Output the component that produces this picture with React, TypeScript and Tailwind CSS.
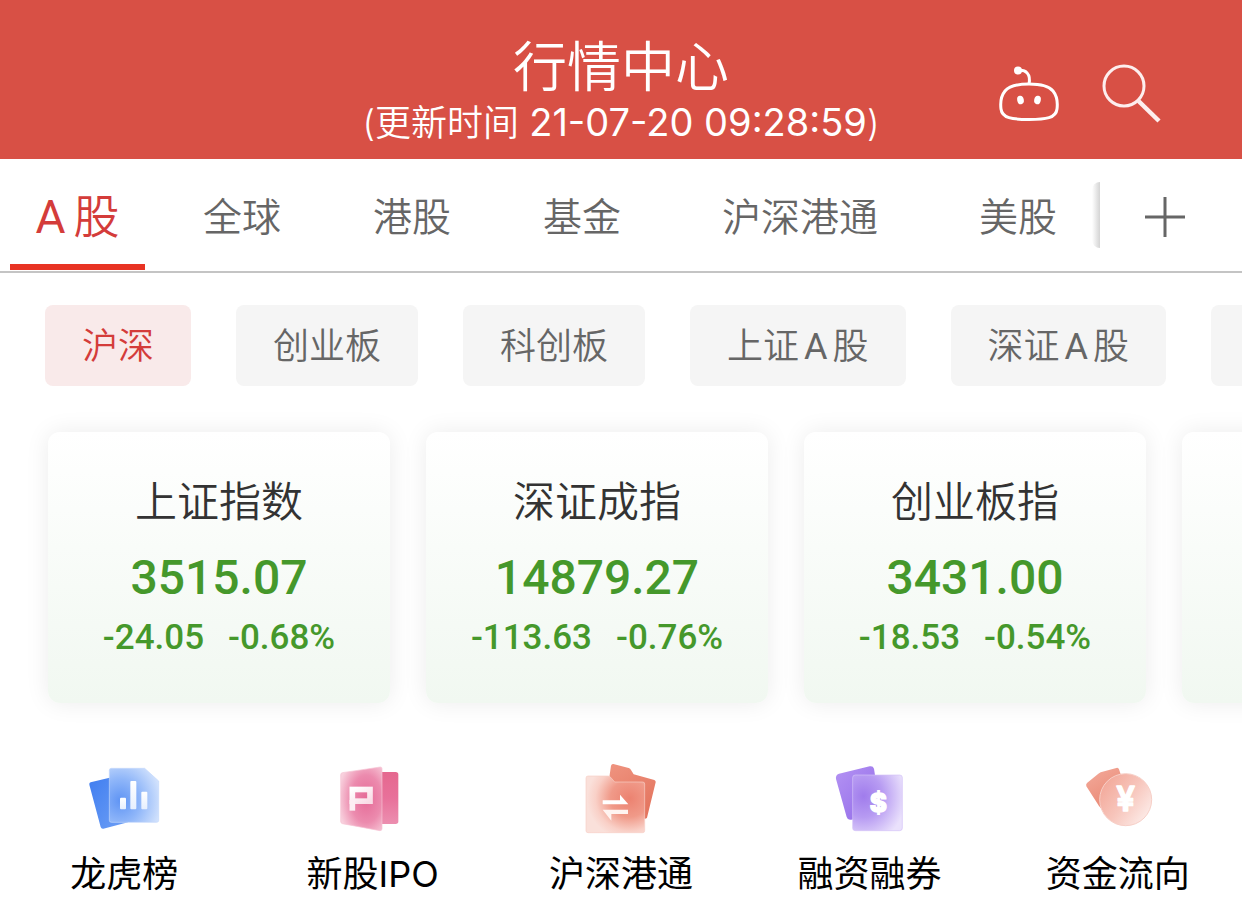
import type { ReactNode } from "react";

const tabs = [
  { label: "全球", width: "w-[170px]" },
  { label: "港股", width: "w-[170px]" },
  { label: "基金", width: "w-[170px]" },
  { label: "沪深港通", width: "w-[266px]" },
  { label: "美股", width: "w-[170px]" },
];

const boards: { key: string; label: ReactNode }[] = [
  { key: "hs", label: "沪深" },
  { key: "cyb", label: "创业板" },
  { key: "kcb", label: "科创板" },
  {
    key: "sha",
    label: (
      <>
        上证<span className="mx-[5px] font-normal">A</span>股
      </>
    ),
  },
  {
    key: "sza",
    label: (
      <>
        深证<span className="mx-[5px] font-normal">A</span>股
      </>
    ),
  },
];

const indices = [
  { name: "上证指数", value: "3515.07", change: "-24.05", percent: "-0.68%" },
  { name: "深证成指", value: "14879.27", change: "-113.63", percent: "-0.76%" },
  { name: "创业板指", value: "3431.00", change: "-18.53", percent: "-0.54%" },
];

function RobotIcon() {
  return (
    <svg width="62" height="56" viewBox="0 0 62 56" fill="none" stroke="#fff" strokeWidth="3">
      <path d="M31 18C44 18 51 20 55 25C59 30 60 35 59 43C58 52 48 53.500 31 53.500C14 53.500 4 52 3 43C2 35 3 30 7 25C11 20 18 18 31 18Z" />
      <path d="M20 4.500C28 3.500 33 8 31 18" />
      <circle cx="20" cy="4.500" r="4" fill="#fff" stroke="none" />
      <ellipse cx="22.500" cy="34" rx="3.300" ry="4.300" fill="#fff" stroke="none" transform="rotate(-12 22.500 34)" />
      <ellipse cx="39.500" cy="34" rx="3.300" ry="4.300" fill="#fff" stroke="none" transform="rotate(12 39.500 34)" />
    </svg>
  );
}

function SearchIcon() {
  return (
    <svg width="60" height="60" viewBox="0 0 60 60" fill="none" stroke="#fdeeee">
      <circle cx="22" cy="22" r="20" strokeWidth="3" />
      <path d="M36.500 37L57 57" strokeWidth="4.500" />
    </svg>
  );
}

function RankIcon() {
  return (
    <svg width="80" height="80" viewBox="72 24 240 240">
      <defs>
        <linearGradient id="rank-back" x1="0" y1="0" x2="1" y2="1">
          <stop offset="0" stopColor="#3f7df0" />
          <stop offset="1" stopColor="#6fa0f5" />
        </linearGradient>
        <radialGradient id="rank-front" cx="0.22" cy="0.6" r="0.9">
          <stop offset="0" stopColor="#5f94f4" />
          <stop offset="0.450" stopColor="#8fb6f9" />
          <stop offset="1" stopColor="#dbe8fd" />
        </radialGradient>
        <linearGradient id="rank-bar" x1="0" y1="0" x2="0" y2="1">
          <stop offset="0" stopColor="#fff" />
          <stop offset="1" stopColor="#e6effe" />
        </linearGradient>
      </defs>
      <path d="M92 97L180 76L204 217L130 236Q124 237 122 231L88 104Q87 98 92 97Z" fill="url(#rank-back)" />
      <path d="M154 55H254L296 93V211Q296 217 290 217H154Q148 217 148 211V61Q148 55 154 55Z" fill="url(#rank-front)" stroke="#c3d8fc" strokeWidth="2" />
      <rect x="180" y="143" width="18" height="35" rx="3" fill="url(#rank-bar)" />
      <rect x="211" y="93" width="18" height="85" rx="3" fill="url(#rank-bar)" />
      <rect x="244" y="125" width="18" height="53" rx="3" fill="url(#rank-bar)" />
    </svg>
  );
}

function IpoIcon() {
  return (
    <svg width="80" height="80" viewBox="98 24 240 240">
      <defs>
        <linearGradient id="ipo-back" x1="0" y1="0" x2="0" y2="1">
          <stop offset="0" stopColor="#e5688f" />
          <stop offset="0.500" stopColor="#e8719a" />
          <stop offset="1" stopColor="#ec8fb0" />
        </linearGradient>
        <radialGradient id="ipo-front" cx="0.62" cy="0.5" r="0.68">
          <stop offset="0" stopColor="#e56a97" />
          <stop offset="0.550" stopColor="#ec8bae" />
          <stop offset="1" stopColor="#f8d0dd" />
        </radialGradient>
        <linearGradient id="ipo-mark" x1="0" y1="0" x2="1" y2="1">
          <stop offset="0" stopColor="#fff" />
          <stop offset="1" stopColor="#f9dce6" />
        </linearGradient>
      </defs>
      <rect x="225" y="66" width="69" height="156" rx="8" fill="url(#ipo-back)" />
      <path d="M126 68L240 51Q245 51 245 56V236Q245 242 239 242L126 221Q121 220 121 214V74Q121 69 126 68Z" fill="url(#ipo-front)" stroke="#f6c3d3" strokeWidth="2" />
      <rect x="156" y="118.500" width="53" height="35" fill="none" stroke="url(#ipo-mark)" strokeWidth="17" />
      <rect x="147.500" y="150" width="17" height="32" fill="#fdeef3" />
    </svg>
  );
}

function ConnectIcon() {
  return (
    <svg width="80" height="80" viewBox="123 24 240 240">
      <defs>
        <linearGradient id="connect-back" x1="0" y1="0" x2="0.600" y2="1">
          <stop offset="0" stopColor="#ef9480" />
          <stop offset="1" stopColor="#e4755f" />
        </linearGradient>
        <radialGradient id="connect-front" cx="0.74" cy="0.4" r="0.72">
          <stop offset="0" stopColor="#ec8270" />
          <stop offset="0.450" stopColor="#f09a89" />
          <stop offset="0.800" stopColor="#f9d0c7" />
          <stop offset="1" stopColor="#fae0da" />
        </radialGradient>
      </defs>
      <path d="M220 42L266 54Q271 56 273 60L281 73L343 90Q348 92 347 97L321 203Q319 206 314 206H206V95L213 47Q215 41 220 42Z" fill="url(#connect-back)" />
      <path d="M144 78H204Q209 78 212 82L224 96H308Q314 96 314 102V242Q314 248 308 248H144Q138 248 138 242V84Q138 78 144 78Z" fill="url(#connect-front)" stroke="#f8cfc6" strokeWidth="2" />
      <path d="M188 151H240V134L265 163H188Z" fill="#fff" />
      <path d="M264 179H188L214 212V192H264Z" fill="#fff4f1" />
    </svg>
  );
}

function MarginIcon() {
  return (
    <svg width="80" height="80" viewBox="118 24 240 240">
      <defs>
        <linearGradient id="margin-back" x1="0" y1="0" x2="1" y2="1">
          <stop offset="0" stopColor="#b493f3" />
          <stop offset="1" stopColor="#9068e8" />
        </linearGradient>
        <radialGradient id="margin-front" cx="0.22" cy="0.38" r="0.85">
          <stop offset="0" stopColor="#a07cec" />
          <stop offset="0.450" stopColor="#b79bf2" />
          <stop offset="1" stopColor="#eae1fc" />
        </radialGradient>
      </defs>
      <path d="M148 71L240 49Q250 47 253 56L275 198L184 209Q174 211 171 201L139 87Q137 75 148 71Z" fill="url(#margin-back)" />
      <rect x="189" y="75" width="149" height="167" rx="8" fill="url(#margin-front)" stroke="#d3c1f8" strokeWidth="2" />
      <text x="266" y="186" textAnchor="middle" fontFamily="Inter, sans-serif" fontWeight="800" fontSize="78" fill="#fff" stroke="#fff" strokeWidth="4">
        $
      </text>
    </svg>
  );
}

function FlowIcon() {
  return (
    <svg width="80" height="80" viewBox="113 24 240 240">
      <defs>
        <linearGradient id="flow-back" x1="0" y1="0" x2="0.500" y2="1">
          <stop offset="0" stopColor="#f3ab9c" />
          <stop offset="1" stopColor="#ea8975" />
        </linearGradient>
        <linearGradient id="flow-front" x1="0.100" y1="0.200" x2="0.900" y2="0.800">
          <stop offset="0" stopColor="#f3ab9d" />
          <stop offset="0.500" stopColor="#f7c5bb" />
          <stop offset="1" stopColor="#fce8e4" />
        </linearGradient>
      </defs>
      <path d="M181 67L228 54Q234 52 236 58L242 76L196 178L185 177Q179 173 176 168L138 109Q136 103 140 99L174 71Z" fill="url(#flow-back)" />
      <circle cx="256" cy="149" r="78" fill="url(#flow-front)" stroke="#f7cfc7" strokeWidth="3" />
      <text x="256" y="184" textAnchor="middle" fontFamily="Inter, sans-serif" fontWeight="600" fontSize="100" fill="#fff" stroke="#fff" strokeWidth="4" strokeLinejoin="round">
        ¥
      </text>
    </svg>
  );
}

const shortcuts = [
  { label: "龙虎榜", icon: <RankIcon /> },
  { label: "新股IPO", icon: <IpoIcon /> },
  { label: "沪深港通", icon: <ConnectIcon /> },
  { label: "融资融券", icon: <MarginIcon /> },
  { label: "资金流向", icon: <FlowIcon /> },
];

export default function App() {
  return (
    <main className="min-h-screen overflow-hidden bg-white font-['Inter','Noto_Sans_CJK_SC',sans-serif] font-[350] text-black">
      {/* Header */}
      <header className="grid grid-cols-[1fr_auto_1fr] items-center bg-[#d85045] pt-9 pb-[14px] text-white">
        <div />
        <div className="text-center">
          <h1 className="text-[54px] leading-[64px]">行情中心</h1>
          <p className="text-[36px] leading-[44px]">
            (更新时间 <time className="text-[38px] font-normal">21-07-20 09:28:59</time>)
          </p>
        </div>
        <div className="flex items-center justify-end gap-[42px] pt-[6px] pr-20">
          <button type="button" aria-label="智能助手">
            <RobotIcon />
          </button>
          <button type="button" aria-label="搜索">
            <SearchIcon />
          </button>
        </div>
      </header>

      {/* Market tabs */}
      <nav className="flex h-[114px] border-b-2 border-[#c4c4c4] text-[39px] text-[#666]">
        <div className="flex min-w-0 flex-1 overflow-hidden pl-[10px]">
          <button
            type="button"
            className="mr-3 mb-px w-[135px] shrink-0 border-b-6 border-[#e83323] pt-3 font-['Roboto','Noto_Sans_CJK_SC',sans-serif] text-[46px] text-[#d43c3a]"
          >
            <span className="mr-2 font-normal">A</span>股
          </button>
          {tabs.map((tab) => (
            <button key={tab.label} type="button" className={`${tab.width} shrink-0 pt-1`}>
              {tab.label}
            </button>
          ))}
        </div>
        <div className="-ml-2 h-[66px] w-2 self-center rounded-l-full bg-linear-to-r from-transparent to-[#d4d4d4]" />
        <button type="button" aria-label="添加" className="flex w-[142px] shrink-0 items-center justify-center pt-1 pr-3">
          <svg width="40" height="40" viewBox="0 0 40 40" stroke="#666" strokeWidth="3">
            <path d="M0 20H40M20 0V40" />
          </svg>
        </button>
      </nav>

      {/* Boards */}
      <div className="flex gap-[45px] overflow-hidden pt-8 pl-[45px] font-['Roboto','Noto_Sans_CJK_SC',sans-serif]">
        {boards.map((board, index) => (
          <button
            key={board.key}
            type="button"
            className={`h-[81px] shrink-0 rounded-lg px-[37px] pt-[2px] text-[36px] ${
              index === 0 ? "bg-[#f9eaea] text-[#d43c3a]" : "bg-[#f5f5f5] text-[#666]"
            }`}
          >
            {board.label}
          </button>
        ))}
        <button type="button" aria-label="更多板块" className="h-[81px] w-[146px] shrink-0 rounded-lg bg-[#f5f5f5]" />
      </div>

      {/* Indices */}
      <section className="flex gap-9 overflow-hidden pt-[46px] pb-9 pl-12">
        {indices.map((item) => (
          <article
            key={item.name}
            className="h-[271px] w-[342px] shrink-0 rounded-xl bg-linear-to-b from-white to-[#f1f8f1] pt-10 text-center shadow-[0_0_24px_rgba(0,0,0,0.08)]"
          >
            <h2 className="text-[42px] leading-[60px] text-[#333]">{item.name}</h2>
            <div className="font-['Roboto',sans-serif] font-medium text-[#45982b]">
              <p className="pt-4 text-[48px] leading-[60px]">{item.value}</p>
              <p className="flex justify-center gap-6 pt-2 text-[35px] leading-[44px]">
                <span>{item.change}</span>
                <span>{item.percent}</span>
              </p>
            </div>
          </article>
        ))}
        <article className="h-[271px] w-[342px] shrink-0 rounded-xl bg-linear-to-b from-white to-[#f1f8f1] shadow-[0_0_24px_rgba(0,0,0,0.08)]" />
      </section>

      {/* Shortcuts */}
      <section className="grid grid-cols-5 pt-[19px] pb-6 text-[36px] font-normal">
        {shortcuts.map((item) => (
          <a key={item.label} href="#" className="flex flex-col items-center gap-2 leading-[56px]">
            {item.icon}
            <span>{item.label}</span>
          </a>
        ))}
      </section>
    </main>
  );
}
